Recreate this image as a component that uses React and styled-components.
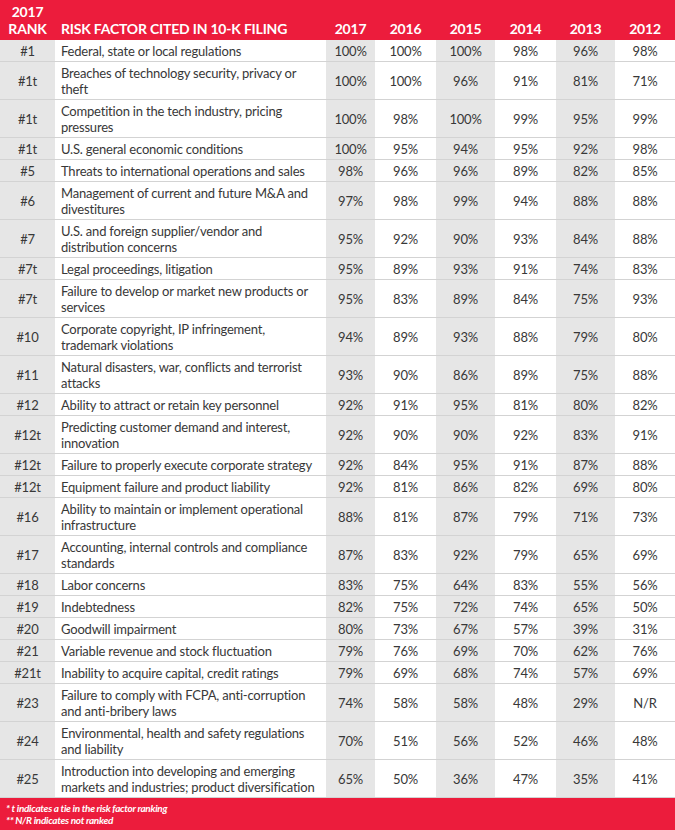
import React from "react";
import styled, { createGlobalStyle } from "styled-components";

const GlobalStyle = createGlobalStyle`
  html, body {
    margin: 0;
    padding: 0;
    background: #ffffff;
  }
  body {
    font-family: "Lato", "Open Sans", sans-serif;
  }
`;

const RED = "#ec1c3c";
const COLS = "55px 271px 49px 61px 59px 61px 59px 60px";

const Wrapper = styled.div`
  width: 675px;
  height: 830px;
  display: flex;
  flex-direction: column;
  color: #383838;
`;

const HeaderRow = styled.div`
  display: grid;
  grid-template-columns: ${COLS};
  background: ${RED};
  height: 40px;
  color: #ffffff;
  font-weight: 700;
  font-size: 14px;
  letter-spacing: -0.2px;
  line-height: 17px;
`;

const HeadCell = styled.div`
  display: flex;
  align-items: flex-end;
  justify-content: ${(p) => (p.$left ? "flex-start" : "center")};
  text-align: center;
  padding: 0 0 3px ${(p) => (p.$left ? "6px" : "0")};
`;

const Row = styled.div`
  display: grid;
  grid-template-columns: ${COLS};
  font-size: 13px;
  letter-spacing: -0.2px;
  line-height: 16px;
`;

const Cell = styled.div`
  display: flex;
  align-items: center;
  justify-content: ${(p) => (p.$left ? "flex-start" : "center")};
  padding: 3px 0 2px ${(p) => (p.$left ? "6px" : "0")};
  background: ${(p) => (p.$shade ? "#e6e6e6" : "#ffffff")};
  border-bottom: 1px solid #d3d3d3;
  white-space: nowrap;
`;

const Footer = styled.div`
  flex: 1;
  background: ${RED};
  color: #ffffff;
  font-size: 10px;
  font-style: italic;
  font-weight: 700;
  letter-spacing: -0.3px;
  line-height: 12px;
  padding: 4px 0 0 6px;
`;

const rows = [
  ["#1", ["Federal, state or local regulations"], "100%", "100%", "100%", "98%", "96%", "98%"],
  ["#1t", ["Breaches of technology security, privacy or", "theft"], "100%", "100%", "96%", "91%", "81%", "71%"],
  ["#1t", ["Competition in the tech industry, pricing", "pressures"], "100%", "98%", "100%", "99%", "95%", "99%"],
  ["#1t", ["U.S. general economic conditions"], "100%", "95%", "94%", "95%", "92%", "98%"],
  ["#5", ["Threats to international operations and sales"], "98%", "96%", "96%", "89%", "82%", "85%"],
  ["#6", ["Management of current and future M&A and", "divestitures"], "97%", "98%", "99%", "94%", "88%", "88%"],
  ["#7", ["U.S. and foreign supplier/vendor and", "distribution concerns"], "95%", "92%", "90%", "93%", "84%", "88%"],
  ["#7t", ["Legal proceedings, litigation"], "95%", "89%", "93%", "91%", "74%", "83%"],
  ["#7t", ["Failure to develop or market new products or", "services"], "95%", "83%", "89%", "84%", "75%", "93%"],
  ["#10", ["Corporate copyright, IP infringement,", "trademark violations"], "94%", "89%", "93%", "88%", "79%", "80%"],
  ["#11", ["Natural disasters, war, conflicts and terrorist", "attacks"], "93%", "90%", "86%", "89%", "75%", "88%"],
  ["#12", ["Ability to attract or retain key personnel"], "92%", "91%", "95%", "81%", "80%", "82%"],
  ["#12t", ["Predicting customer demand and interest,", "innovation"], "92%", "90%", "90%", "92%", "83%", "91%"],
  ["#12t", ["Failure to properly execute corporate strategy"], "92%", "84%", "95%", "91%", "87%", "88%"],
  ["#12t", ["Equipment failure and product liability"], "92%", "81%", "86%", "82%", "69%", "80%"],
  ["#16", ["Ability to maintain or implement operational", "infrastructure"], "88%", "81%", "87%", "79%", "71%", "73%"],
  ["#17", ["Accounting, internal controls and compliance", "standards"], "87%", "83%", "92%", "79%", "65%", "69%"],
  ["#18", ["Labor concerns"], "83%", "75%", "64%", "83%", "55%", "56%"],
  ["#19", ["Indebtedness"], "82%", "75%", "72%", "74%", "65%", "50%"],
  ["#20", ["Goodwill impairment"], "80%", "73%", "67%", "57%", "39%", "31%"],
  ["#21", ["Variable revenue and stock fluctuation"], "79%", "76%", "69%", "70%", "62%", "76%"],
  ["#21t", ["Inability to acquire capital, credit ratings"], "79%", "69%", "68%", "74%", "57%", "69%"],
  ["#23", ["Failure to comply with FCPA, anti-corruption", "and anti-bribery laws"], "74%", "58%", "58%", "48%", "29%", "N/R"],
  ["#24", ["Environmental, health and safety regulations", "and liability"], "70%", "51%", "56%", "52%", "46%", "48%"],
  ["#25", ["Introduction into developing and emerging", "markets and industries; product diversification"], "65%", "50%", "36%", "47%", "35%", "41%"],
];

const years = ["2017", "2016", "2015", "2014", "2013", "2012"];

export default function App() {
  return (
    <>
      <GlobalStyle />
      <Wrapper>
        <HeaderRow>
          <HeadCell>
            2017
            <br />
            RANK
          </HeadCell>
          <HeadCell $left>RISK FACTOR CITED IN 10-K FILING</HeadCell>
          {years.map((y) => (
            <HeadCell key={y}>{y}</HeadCell>
          ))}
        </HeaderRow>
        {rows.map((r, i) => (
          <Row key={i}>
            <Cell $shade>{r[0]}</Cell>
            <Cell $left>
              <span>
                {r[1].map((line, k) => (
                  <React.Fragment key={k}>
                    {k > 0 && <br />}
                    {line}
                  </React.Fragment>
                ))}
              </span>
            </Cell>
            {r.slice(2).map((v, j) => (
              <Cell key={j} $shade={j % 2 === 0}>
                {v}
              </Cell>
            ))}
          </Row>
        ))}
        <Footer>
          * t indicates a tie in the risk factor ranking
          <br />
          ** N/R indicates not ranked
        </Footer>
      </Wrapper>
    </>
  );
}
